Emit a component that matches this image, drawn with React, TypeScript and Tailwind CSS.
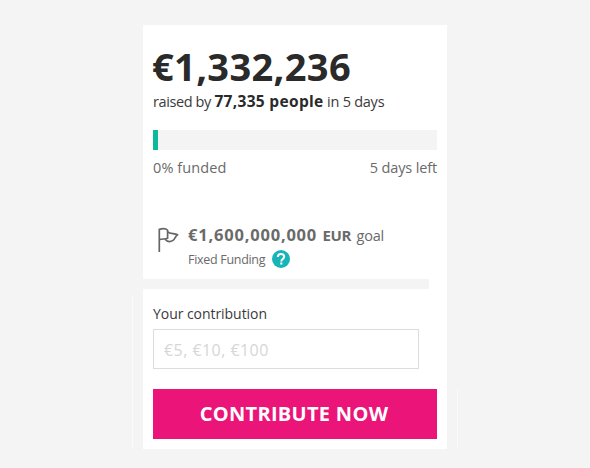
function FlagIcon() {
  return (
    <svg
      aria-hidden="true"
      className="h-[26px] w-[22px] shrink-0"
      fill="none"
      stroke="#666"
      strokeLinejoin="round"
      strokeWidth="1.7"
      viewBox="0 0 22 26"
    >
      <path d="M2.3 25V2.4C4.6 1.6 8.6 1 10.6 3.2v8C8.4 12.2 5.2 11.8 2.3 12.8" />
      <path d="M10.6 4.8c2.6 2.6 6.6 1.2 10 3-2.2 1.2-2.2 3.8-4.6 5.6-2.6 1.8-5.6 1.6-8-1.2" />
    </svg>
  );
}

function HelpIcon() {
  return (
    <svg aria-hidden="true" className="size-[18px] shrink-0" viewBox="0 0 18 18">
      <circle cx="9" cy="9" fill="#17b4b8" r="9" />
      <path
        d="M5.8 7C5.8 5.1 7.1 4.1 9 4.1s3.2 1.1 3.2 2.7c0 2.2-2.9 2.1-2.9 4.6"
        fill="none"
        stroke="#fff"
        strokeWidth="2"
      />
      <path d="M8.3 12.4h2v2.2h-2z" fill="#fff" />
    </svg>
  );
}

function Summary() {
  return (
    <section className="flex h-[254px] flex-col px-2.5 pt-[18px]">
      <h1 className="-ml-px h-[49px] text-[38px] leading-[46px] font-bold tracking-[0.35px] text-[#2a2a2a]">
        €1,332,236
      </h1>
      <p className="flex h-5 items-center gap-[3.5px] text-[14.5px] text-[#3a3a3a]">
        <span className="tracking-[-0.4px]">raised by</span>
        <strong className="text-[15.5px] font-bold tracking-[0.32px] text-[#2a2a2a]">
          77,335 people
        </strong>
        <span className="tracking-[-0.25px]">in 5 days</span>
      </p>
      <div className="mt-[18px] h-5 bg-[#f4f4f4]">
        <div className="h-full w-[5px] bg-[#0eb99a]" />
      </div>
      <div className="mt-2 flex h-5 items-center justify-between text-[14.5px] text-[#6a6a6a]">
        <p className="tracking-[0.1px]">
          <span className="font-medium">0%</span> funded
        </p>
        <p className="tracking-[-0.15px]">
          <span className="font-medium">5</span> days left
        </p>
      </div>
      <div className="mt-[47px] flex">
        <div className="w-[35px] pt-0.5 pl-1">
          <FlagIcon />
        </div>
        <div>
          <p className="flex h-[22px] items-baseline gap-[5.5px] text-[14.5px] leading-5 text-[#6a6a6a]">
            <strong className="text-[16.5px] font-bold tracking-[0.8px]">
              €1,600,000,000
            </strong>
            <strong className="text-[15px] font-bold tracking-[-0.4px]">
              EUR
            </strong>
            <span className="tracking-[-0.2px]">goal</span>
          </p>
          <p className="flex h-6 items-center gap-[7px] text-[12.5px] tracking-[-0.3px] text-[#6a6a6a]">
            <span className="pt-0.5">Fixed Funding</span>
            <HelpIcon />
          </p>
        </div>
      </div>
    </section>
  );
}

function ContributionForm() {
  return (
    <form className="flex flex-col px-2.5 pt-[15px]">
      <label
        className="h-5 text-[14px] leading-5 tracking-[-0.05px] text-[#3a3a3a]"
        htmlFor="amount"
      >
        Your contribution
      </label>
      <input
        className="mt-[5px] h-10 w-[266px] border border-[#dcdcdc] px-2.5 pt-0.5 text-[16px] tracking-[0.45px] placeholder:text-[#d6d6d6]"
        id="amount"
        placeholder="€5, €10, €100"
      />
      <button
        className="mt-5 h-[50px] bg-[#eb1478] pr-0.5 text-[20px] font-bold tracking-[0.3px] text-white"
        type="button"
      >
        CONTRIBUTE NOW
      </button>
    </form>
  );
}

export default function App() {
  return (
    <main className="flex h-[468px] justify-center bg-[#f4f4f4] pt-[25px] font-['Open_Sans',sans-serif] whitespace-nowrap">
      <div className="mt-[270px] mr-2.5 h-[154px] w-px bg-[#fafafa]" />
      <div className="h-[424px] w-[304px] bg-white">
        <Summary />
        <div className="h-2.5 w-[286px] bg-[#f4f4f4]" />
        <ContributionForm />
      </div>
      <div className="mt-[364px] ml-2.5 h-[60px] w-px bg-[#fafafa]" />
    </main>
  );
}
